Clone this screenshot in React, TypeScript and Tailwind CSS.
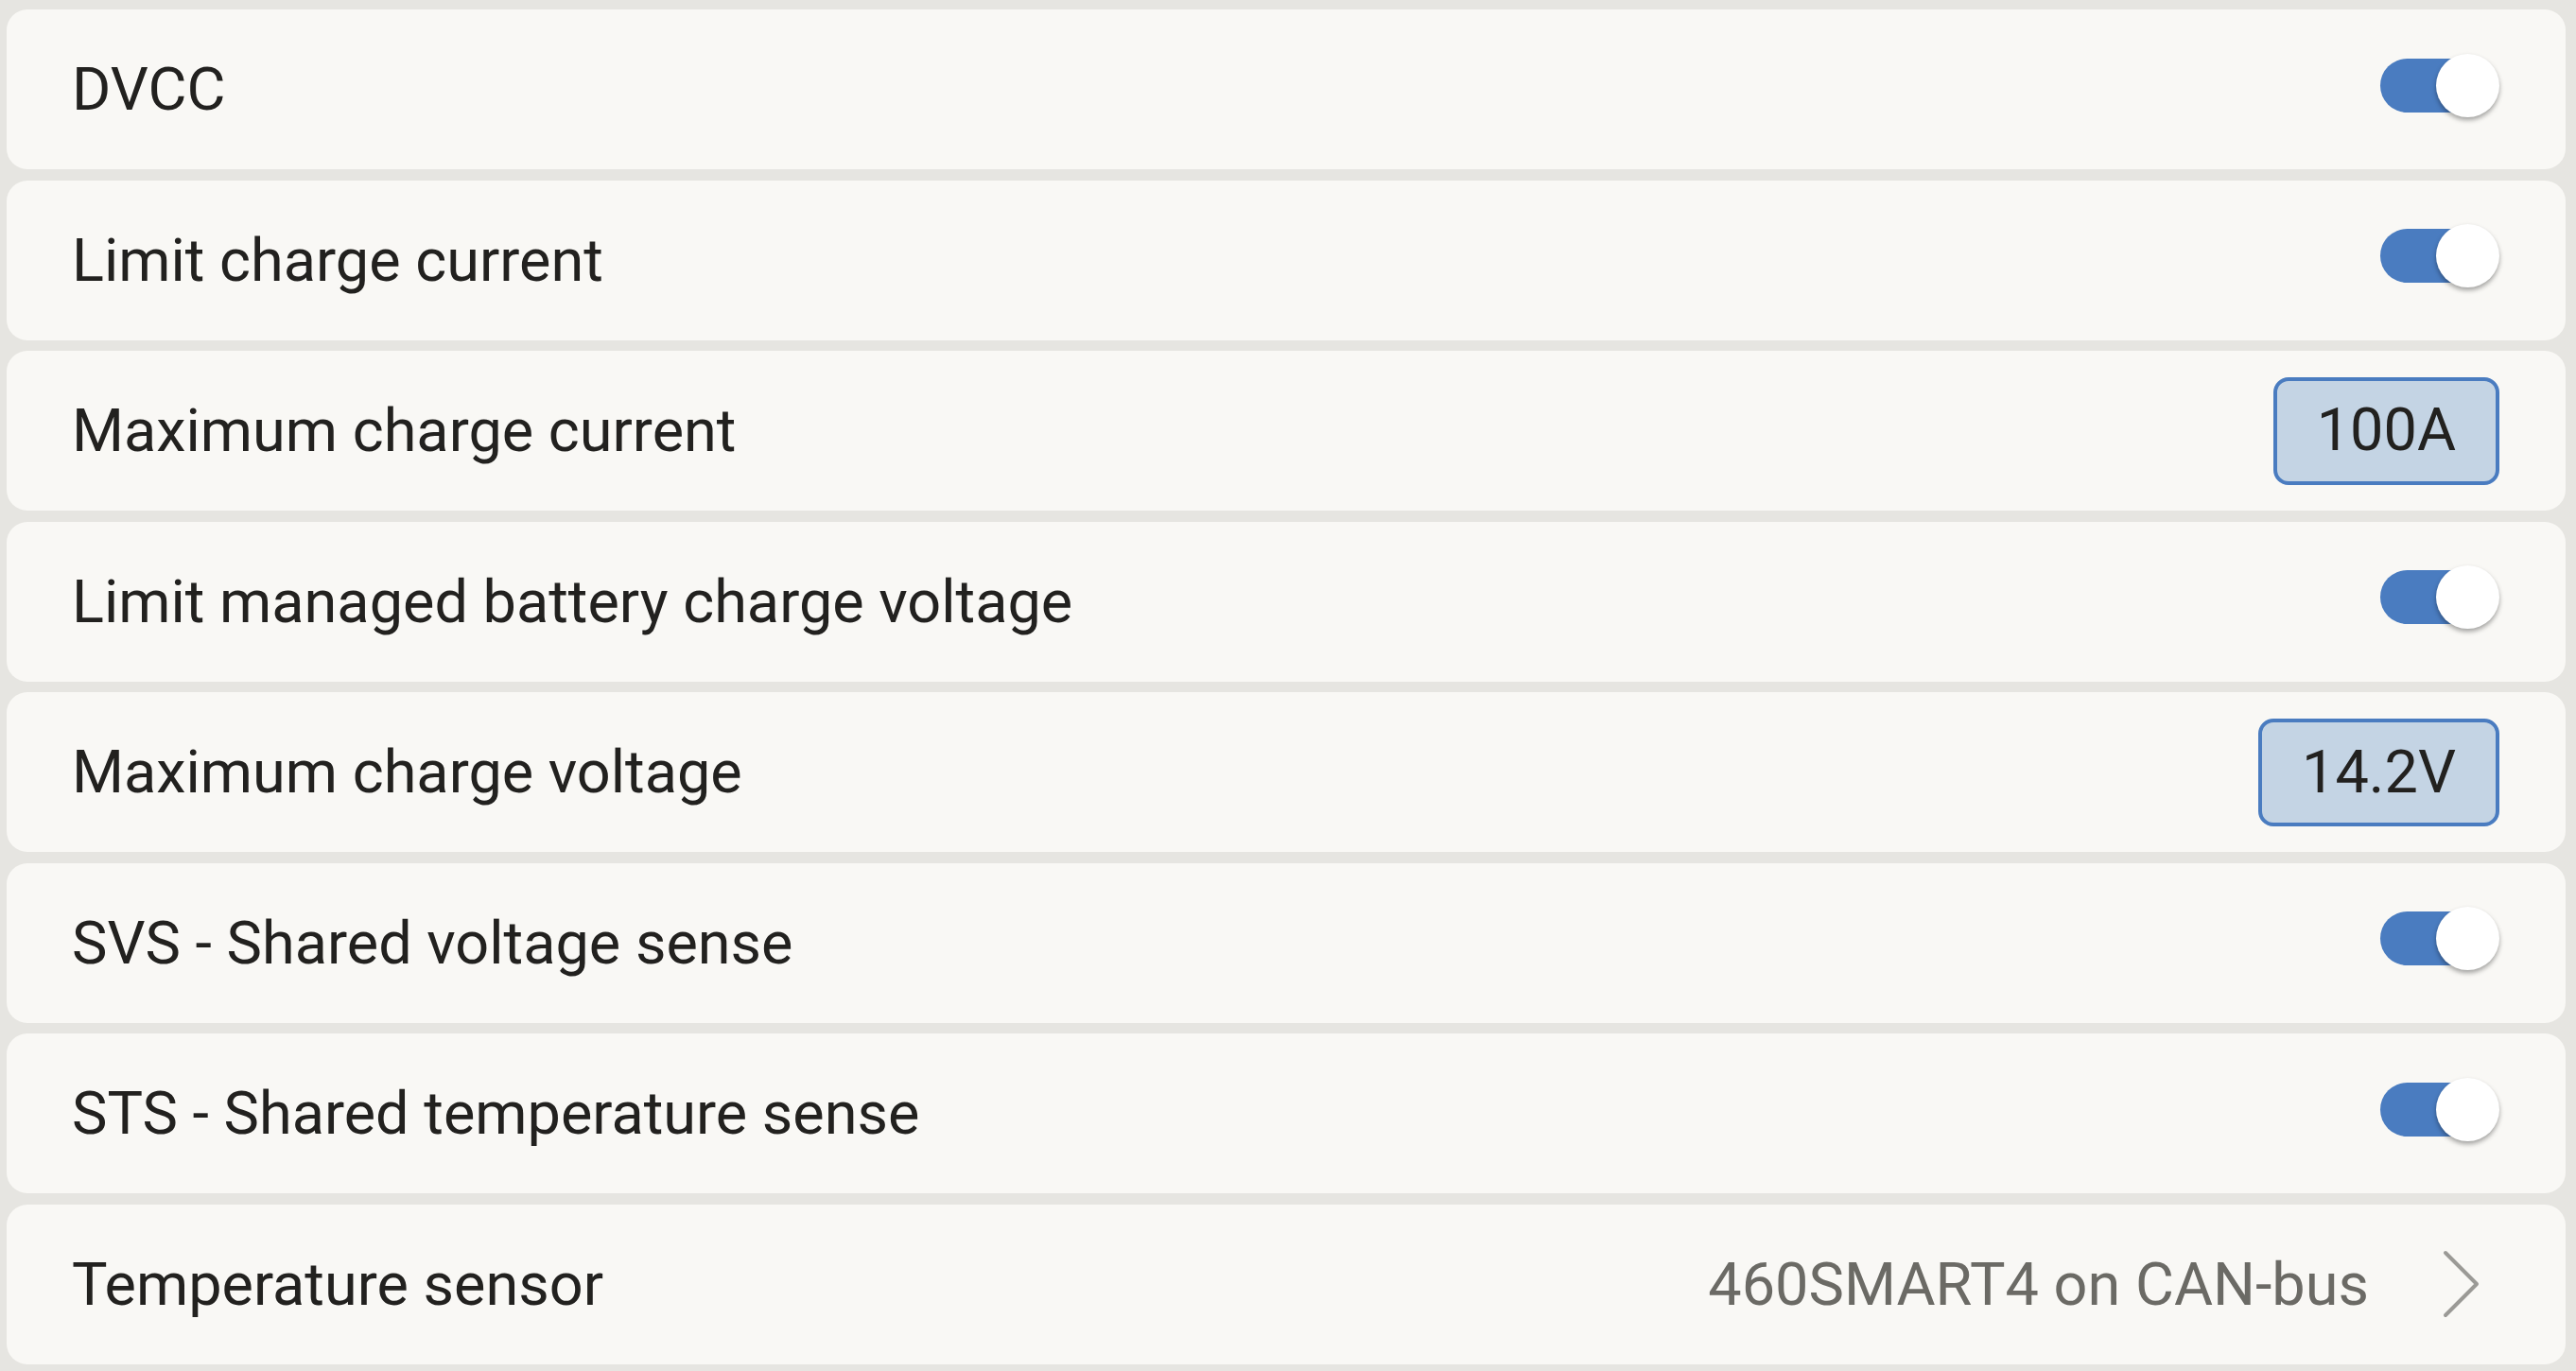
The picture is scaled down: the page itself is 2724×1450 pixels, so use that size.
import React from "react";

type Row =
  | { label: string; kind: "toggle" }
  | { label: string; kind: "box"; value: string }
  | { label: string; kind: "link"; value: string };

const rows: Row[] = [
  { label: "DVCC", kind: "toggle" },
  { label: "Limit charge current", kind: "toggle" },
  { label: "Maximum charge current", kind: "box", value: "100A" },
  { label: "Limit managed battery charge voltage", kind: "toggle" },
  { label: "Maximum charge voltage", kind: "box", value: "14.2V" },
  { label: "SVS - Shared voltage sense", kind: "toggle" },
  { label: "STS - Shared temperature sense", kind: "toggle" },
  { label: "Temperature sensor", kind: "link", value: "460SMART4 on CAN-bus" },
];

function Toggle() {
  return (
    <div className="relative w-[126px] h-[68px] -translate-y-[4px]">
      <div className="absolute left-0 top-[5px] w-[112px] h-[57px] rounded-full bg-[#4a7cc0]" />
      <div className="absolute right-0 top-0 w-[67px] h-[67px] rounded-full bg-white shadow-[0_3px_5px_rgba(0,0,0,0.35)]" />
    </div>
  );
}

function ValueBox({ value }: { value: string }) {
  return (
    <div className="flex items-center h-[114px] px-[42px] rounded-[16px] border-[4px] border-[#4a7cc0] bg-[#c4d4e4] text-[63px] text-[#22211f]">
      {value}
    </div>
  );
}

function Chevron() {
  return (
    <svg width="40" height="72" viewBox="0 0 40 72" fill="none" className="mr-[20px]">
      <polyline
        points="3,3 36,36 3,69"
        stroke="#9b9a96"
        strokeWidth="4"
        strokeLinecap="round"
        strokeLinejoin="round"
      />
    </svg>
  );
}

export default function App() {
  return (
    <div
      className="w-[2724px] h-[1450px] bg-[#e6e5e1] pt-[10px] pl-[7px] pr-[11px] flex flex-col gap-[11.57px]"
      style={{ fontFamily: "Roboto, 'Liberation Sans', sans-serif" }}
    >
      {rows.map((row) => (
        <div
          key={row.label}
          className="h-[169px] shrink-0 rounded-[22px] bg-[#f9f8f5] flex items-center justify-between pl-[69px] pr-[70px]"
        >
          <span className="text-[63px] text-[#22211f] leading-none">{row.label}</span>
          {row.kind === "toggle" && <Toggle />}
          {row.kind === "box" && <ValueBox value={row.value} />}
          {row.kind === "link" && (
            <div className="flex items-center gap-[78px]">
              <span className="text-[63px] text-[#6b6a65] leading-none">{row.value}</span>
              <Chevron />
            </div>
          )}
        </div>
      ))}
    </div>
  );
}
